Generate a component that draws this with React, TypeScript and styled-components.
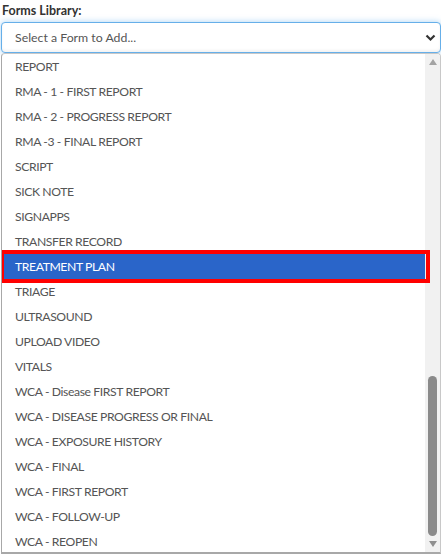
import React from "react";
import styled, { createGlobalStyle } from "styled-components";

const Global = createGlobalStyle`
  html, body { margin: 0; padding: 0; background: #fff; }
  body { font-family: Lato, "Open Sans", sans-serif; overflow: hidden; }
`;

const Page = styled.div`
  padding: 0 0 0 1px;
  width: 440px;
`;

const Label = styled.div`
  font-size: 12.5px;
  font-weight: 700;
  color: #333;
  height: 21px;
  line-height: 21px;
  padding-left: 1px;
`;

const Select = styled.div`
  box-sizing: border-box;
  height: 31px;
  margin-top: 1px;
  border: 1px solid #66afe9;
  border-radius: 4px;
  box-shadow: inset 0 -2px 3px rgba(0, 0, 0, 0.05), 0 0 6px rgba(102, 175, 233, 0.55);
  display: flex;
  align-items: center;
  justify-content: space-between;
  padding: 0 4px 0 13px;
  font-size: 12.3px;
  color: #555;
  background: #fff;
`;

const Panel = styled.div`
  box-sizing: border-box;
  height: 501px;
  border: 1px solid #c8c8c8;
  border-left-color: #a8a8a8;
  border-bottom: 2px solid #a8a8a8;
  border-radius: 4px 4px 0 0;
  display: flex;
  overflow: hidden;
  background: #fff;
`;

const List = styled.ul`
  list-style: none;
  margin: 0;
  padding: 0;
  flex: 1;
  min-width: 0;
  position: relative;
  z-index: 1;
`;

const Item = styled.li<{ $selected?: boolean }>`
  position: relative;
  height: 25px;
  line-height: 25px;
  padding-left: 13px;
  font-size: 12.2px;
  letter-spacing: -0.4px;
  color: ${(p) => (p.$selected ? "#fff" : "#555")};
  background: ${(p) => (p.$selected ? "#2a65c9" : "transparent")};
  white-space: nowrap;
`;

const Highlight = styled.span`
  position: absolute;
  top: -4px;
  bottom: -4px;
  left: -2px;
  right: -5px;
  border: 4px solid #ff0000;
  pointer-events: none;
`;

const Scrollbar = styled.div`
  width: 15px;
  flex: none;
  background: #f1f1f1;
  display: flex;
  flex-direction: column;
`;

const Arrow = styled.div<{ $down?: boolean }>`
  height: 16px;
  flex: none;
  display: flex;
  align-items: center;
  justify-content: center;
  &::before {
    content: "";
    width: 0;
    height: 0;
    border-left: 4.5px solid transparent;
    border-right: 4.5px solid transparent;
    ${(p) => (p.$down ? "border-top: 6px solid #8f8f8f;" : "border-bottom: 6px solid #a3a3a3;")}
  }
`;

const Track = styled.div`
  flex: 1;
  display: flex;
  flex-direction: column;
  justify-content: flex-end;
`;

const Thumb = styled.div`
  height: 160px;
  margin: 0 3px 0 3px;
  border-radius: 5px;
  background: #8a8a8a;
`;

const items = [
  "REPORT",
  "RMA - 1 - FIRST REPORT",
  "RMA - 2 - PROGRESS REPORT",
  "RMA -3 - FINAL REPORT",
  "SCRIPT",
  "SICK NOTE",
  "SIGNAPPS",
  "TRANSFER RECORD",
  "TREATMENT PLAN",
  "TRIAGE",
  "ULTRASOUND",
  "UPLOAD VIDEO",
  "VITALS",
  "WCA - Disease FIRST REPORT",
  "WCA - DISEASE PROGRESS OR FINAL",
  "WCA - EXPOSURE HISTORY",
  "WCA - FINAL",
  "WCA - FIRST REPORT",
  "WCA - FOLLOW-UP",
  "WCA - REOPEN",
];

export default function App() {
  return (
    <Page>
      <Global />
      <Label>Forms Library:</Label>
      <Select>
        <span>Select a Form to Add...</span>
        <svg width="11" height="8" viewBox="0 0 11 8">
          <path d="M1.5 1.5 L5.5 5.5 L9.5 1.5" fill="none" stroke="#333" strokeWidth="2.2" />
        </svg>
      </Select>
      <Panel>
        <List>
          {items.map((t) => (
            <Item key={t} $selected={t === "TREATMENT PLAN"}>
              {t}
              {t === "TREATMENT PLAN" && <Highlight />}
            </Item>
          ))}
        </List>
        <Scrollbar>
          <Arrow />
          <Track>
            <Thumb />
          </Track>
          <Arrow $down />
        </Scrollbar>
      </Panel>
    </Page>
  );
}
